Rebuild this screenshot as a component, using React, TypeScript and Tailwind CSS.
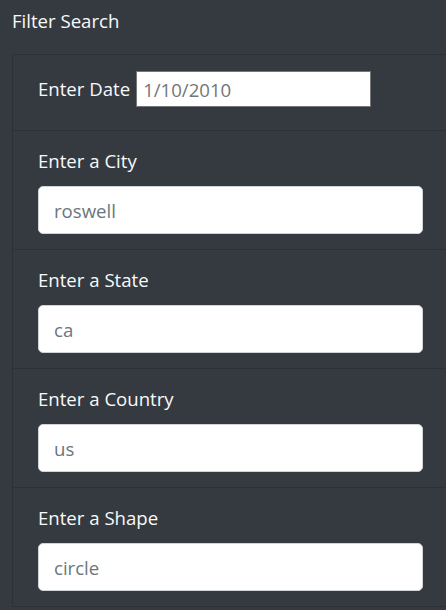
const fields = [
  { label: 'Enter a City', value: 'roswell' },
  { label: 'Enter a State', value: 'ca' },
  { label: 'Enter a Country', value: 'us' },
  { label: 'Enter a Shape', value: 'circle' },
]

export default function App() {
  return (
    <div
      className="min-h-[610px] w-[446px] overflow-hidden bg-[#343a40] pl-3 text-[18.6px] text-[#f8f9fa]"
      style={{ fontFamily: '"Open Sans", "Noto Sans", sans-serif' }}
    >
      <h5 className="flex h-[54px] items-start pt-[6px] leading-[30px]">Filter Search</h5>
      <ul className="-mr-2 border-l border-[#2c3136]">
        <li className="flex h-[76px] items-start gap-[6px] border-t border-[#2c3136] pl-[25px] pt-[16px]">
          <label className="leading-[36px]">Enter Date</label>
          <input
            className="h-[36px] w-[235px] border border-[#767676] bg-white px-[6px] text-[18.6px] outline-none placeholder:text-[#757575]"
            placeholder="1/10/2010"
          />
        </li>
        {fields.map((f) => (
          <li key={f.label} className="flex h-[119px] flex-col border-t border-[#2c3136] pl-[25px] pr-[31px] pt-[15px]">
            <label className="mb-[10px] leading-[30px]">{f.label}</label>
            <input
              className="h-[48px] w-full rounded-[5px] border border-[#ced4da] bg-white px-[15px] text-[18.6px] text-[#495057] outline-none placeholder:text-[#6c757d]"
              placeholder={f.value}
            />
          </li>
        ))}
        <li className="border-t border-[#2c3136]" />
      </ul>
    </div>
  )
}
